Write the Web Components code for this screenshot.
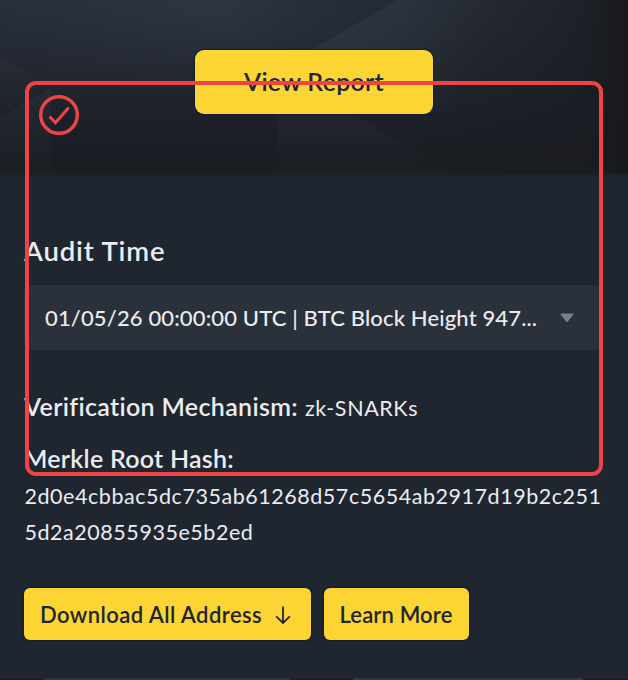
<!DOCTYPE html>
<html lang="en">
<head>
<meta charset="utf-8">
<title>Proof of Reserves</title>
<style>
html, body { margin: 0; height: 100%; background: #202630; overflow: hidden; }
body { font-family: Lato, "Liberation Sans", sans-serif; color: #eaecef; }
</style>
</head>
<body>
<reserve-page>
  <hero-banner slot="hero"><gold-button class="large">View Report</gold-button></hero-banner>
  <audit-select slot="audit" label="Audit Time">01/05/26 00:00:00 UTC | BTC Block Height 947...</audit-select>
  <proof-details slot="details">
    <span slot="mechanism">zk-SNARKs</span>
    <span slot="hash">2d0e4cbbac5dc735ab61268d57c5654ab2917d19b2c251<br>5d2a20855935e5b2ed</span>
  </proof-details>
  <gold-button slot="actions" class="download">Download All Address<arrow-down></arrow-down></gold-button>
  <gold-button slot="actions" class="learn">Learn More</gold-button>
</reserve-page>
<script>
const define = (name, html) => customElements.define(name, class extends HTMLElement {
  connectedCallback() {
    if (this.shadowRoot) return;
    this.attachShadow({ mode: 'open' }).innerHTML = html;
    const label = this.shadowRoot.querySelector('[data-label]');
    if (label) label.textContent = this.getAttribute('label');
  }
});

define('gold-button', `<style>
:host { display: flex; align-items: center; box-sizing: border-box; height: 52px; padding: 1px 0 0 16px;
  border-radius: 6px; background: #fcd535; color: #202630; white-space: nowrap;
  font-size: 22px; font-weight: 600; line-height: 50px; box-shadow: 0 0 1.5px 1px #131b2e; }
:host(.large) { width: 238px; height: 64px; padding: 0 0 3px; justify-content: center; border-radius: 9px;
  font-size: 25px; letter-spacing: .26px; line-height: 60px; }
:host(.download) { width: 287px; letter-spacing: .42px; }
:host(.learn) { width: 145px; letter-spacing: .14px; }
</style><slot></slot>`);

define('arrow-down', `<style>:host { display: block; width: 16px; height: 20px; margin-left: 13px; } svg { display: block; }</style>
<svg width="16" height="20" viewBox="0 0 16 20" fill="none" stroke="#202630" stroke-width="1.8"><path d="M8 1.5V18M1.2 11.3L8 18l6.8-6.7"/></svg>`);

define('hero-banner', `<style>
:host { display: grid; height: 176px; overflow: hidden; }
svg, .content { grid-area: 1 / 1; }
.content { display: flex; justify-content: center; align-items: flex-start; padding-top: 50px; z-index: 1; }
</style>
<svg width="628" height="176" viewBox="0 0 628 176">
<defs>
<linearGradient id="base" x2="0" y2="1"><stop stop-color="#29303a"/><stop offset=".38" stop-color="#222731"/><stop offset=".7" stop-color="#1c2028"/><stop offset="1" stop-color="#1a1c20"/></linearGradient>
<radialGradient id="glow" gradientUnits="userSpaceOnUse" cx="0" cy="0" r="1" gradientTransform="translate(220 5) scale(260 95)"><stop stop-color="#333942" stop-opacity=".65"/><stop offset="1" stop-color="#2b313b" stop-opacity="0"/></radialGradient>
<linearGradient id="right"><stop offset=".65" stop-color="#1a1c20" stop-opacity="0"/><stop offset=".93" stop-color="#1a1c22" stop-opacity=".75"/><stop offset="1" stop-color="#18191c"/></linearGradient>
<linearGradient id="facet" x2="0" y2="1"><stop stop-color="#303640" stop-opacity=".55"/><stop offset="1" stop-color="#24262a" stop-opacity=".2"/></linearGradient>
<linearGradient id="wedge" gradientUnits="userSpaceOnUse" x1="350" y1="20" x2="470" y2="95"><stop stop-color="#2e3540" stop-opacity=".85"/><stop offset="1" stop-color="#2a303a" stop-opacity="0"/></linearGradient>
<linearGradient id="blue"><stop stop-color="#202832" stop-opacity="0"/><stop offset="1" stop-color="#202832" stop-opacity=".75"/></linearGradient>
<linearGradient id="fade" x2="0" y2="1"><stop stop-color="#202630" stop-opacity="0"/><stop offset="1" stop-color="#202630"/></linearGradient>
</defs>
<rect width="628" height="176" fill="url(#base)"/>
<rect width="628" height="176" fill="url(#glow)"/>
<path d="M220 0H398L318 46L278 64Z" fill="url(#blue)"/>
<path d="M398 0H628V110H250L318 46Z" fill="url(#wedge)"/>
<path d="M0 57L43 81L0 117Z" fill="url(#facet)" opacity=".6"/>
<path d="M0 117L51 88V176H0Z" fill="url(#facet)" opacity=".7"/>
<path d="M278 114H352L450 172V176H278Z" fill="url(#facet)" opacity=".45"/>
<rect width="628" height="176" fill="url(#right)"/>
<rect y="172" width="628" height="5" fill="url(#fade)"/>
</svg>
<div class="content"><slot></slot></div>`);

define('audit-select', `<style>
:host { display: block; }
.label { font-size: 27.5px; font-weight: 600; line-height: 34px; letter-spacing: .85px; padding-bottom: 17px; }
.box { display: flex; align-items: center; justify-content: space-between; height: 65px; box-sizing: border-box;
  padding: 1px 29px 0 21px; border-radius: 9px; background: #2b313b; }
.value { font-size: 22px; font-weight: 500; line-height: 30px; letter-spacing: .137px; white-space: nowrap; }
</style>
<div class="label" data-label></div>
<div class="box"><span class="value"><slot></slot></span>
<svg width="14" height="10" viewBox="0 0 14 10"><path d="M.8 1H13.2L7 9Z" fill="#76808f" stroke="#76808f" stroke-width="1" stroke-linejoin="round"/></svg></div>`);

define('proof-details', `<style>
:host { display: block; }
.row { display: flex; align-items: baseline; height: 34px; line-height: 34px; }
b { font-size: 25px; font-weight: 600; letter-spacing: .33px; white-space: nowrap; }
.row slot { font-size: 21.5px; }
.mechanism { gap: 7px; letter-spacing: .6px; }
.root { margin-top: 18px; }
.root b { letter-spacing: .25px; }
.hash { margin-top: 3px; padding-left: .5px; font-size: 21.5px; line-height: 36px; letter-spacing: .54px; white-space: nowrap; }
</style>
<div class="row mechanism"><b>Verification Mechanism:</b><slot name="mechanism" style="display:block"></slot></div>
<div class="row root"><b>Merkle Root Hash:</b></div>
<div class="hash"><slot name="hash"></slot></div>`);

define('check-annotation', `<style>
:host { display: block; box-sizing: border-box; width: 578px; height: 395px; border: 4px solid #ef4444; border-radius: 11px; padding: 10px; }
svg { display: block; }
</style>
<svg width="40" height="40" viewBox="0 0 40 40" fill="none" stroke="#ef4444"><circle cx="20" cy="20" r="18.3" stroke-width="3.4"/><path d="M10.5 21.5L16.5 27.8L29.8 12.5" stroke-width="3"/></svg>`);

define('reserve-page', `<style>
:host { display: flex; flex-direction: column; position: relative; width: 628px; height: 680px; background: #202630; overflow: hidden; }
.body { display: flex; flex-direction: column; flex: 1; padding: 58px 25px 0 24px; }
.details { padding-top: 39px; }
.actions { display: flex; gap: 12.5px; padding-top: 38px; }
.cards { display: grid; grid-template-columns: 246px 230px; gap: 63px; height: 2px; padding: 0 45px 0 44px; background: linear-gradient(#202630 0 50%, #1b1e27 50%); }
.cards i { background: linear-gradient(#2b313b, #343b47); border-radius: 6px 6px 0 0; }
.overlay { position: absolute; left: 25px; top: 81px; z-index: 2; pointer-events: none; }
</style>
<slot name="hero"></slot>
<div class="body">
<slot name="audit"></slot>
<div class="details"><slot name="details"></slot></div>
<div class="actions"><slot name="actions"></slot></div>
</div>
<div class="cards"><i></i><i></i></div>
<check-annotation class="overlay"></check-annotation>`);
</script>
</body>
</html>
